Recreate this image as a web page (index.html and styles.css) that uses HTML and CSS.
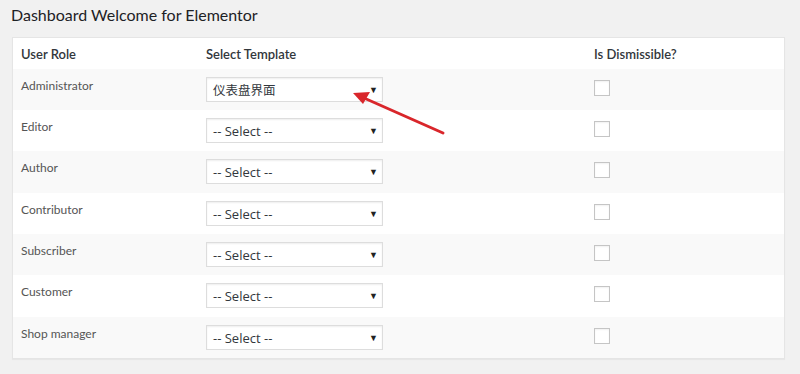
FILE: index.html
```html
<!DOCTYPE html>
<html lang="en">
<head>
<meta charset="utf-8">
<title>Dashboard Welcome for Elementor</title>
<link rel="stylesheet" href="styles.css">
</head>
<body>
<div class="page">
  <h2 class="title">Dashboard Welcome for Elementor</h2>
  <div class="panel">
    <table class="roles">
      <colgroup>
        <col class="c-role">
        <col class="c-tpl">
        <col class="c-dis">
      </colgroup>
      <thead>
        <tr>
          <th>User Role</th>
          <th>Select Template</th>
          <th>Is Dismissible?</th>
        </tr>
      </thead>
      <tbody>
        <tr class="alt">
          <td class="role">Administrator</td>
          <td><div class="sel"><span class="cjk">仪表盘界面</span><span class="caret">▼</span></div></td>
          <td><span class="cb"></span></td>
        </tr>
        <tr>
          <td class="role">Editor</td>
          <td><div class="sel"><span>-- Select --</span><span class="caret">▼</span></div></td>
          <td><span class="cb"></span></td>
        </tr>
        <tr class="alt tall">
          <td class="role">Author</td>
          <td><div class="sel"><span>-- Select --</span><span class="caret">▼</span></div></td>
          <td><span class="cb"></span></td>
        </tr>
        <tr>
          <td class="role">Contributor</td>
          <td><div class="sel"><span>-- Select --</span><span class="caret">▼</span></div></td>
          <td><span class="cb"></span></td>
        </tr>
        <tr class="alt">
          <td class="role">Subscriber</td>
          <td><div class="sel"><span>-- Select --</span><span class="caret">▼</span></div></td>
          <td><span class="cb"></span></td>
        </tr>
        <tr class="tall">
          <td class="role">Customer</td>
          <td><div class="sel"><span>-- Select --</span><span class="caret">▼</span></div></td>
          <td><span class="cb"></span></td>
        </tr>
        <tr class="alt">
          <td class="role">Shop manager</td>
          <td><div class="sel"><span>-- Select --</span><span class="caret">▼</span></div></td>
          <td><span class="cb"></span></td>
        </tr>
      </tbody>
    </table>
  </div>
  <svg class="arrow" width="800" height="374" viewBox="0 0 800 374" aria-hidden="true">
    <line x1="443" y1="133" x2="364" y2="98" stroke="#d9262b" stroke-width="3" stroke-linecap="round"/>
    <polygon points="353,93 370,92 363,104" fill="#d9262b"/>
  </svg>
</div>
</body>
</html>
```

FILE: styles.css
```css
html, body {
  margin: 0;
  padding: 0;
}
body {
  background: #f1f1f1;
  font-family: Lato, "Open Sans", "Noto Sans CJK SC", sans-serif;
  color: #444;
  width: 800px;
  height: 374px;
  overflow: hidden;
}
.page {
  position: relative;
  padding: 0 15px 0 12px;
}
.title {
  margin: 0;
  padding: 5px 0 0 0;
  height: 33px;
  box-sizing: border-box;
  font-size: 16px;
  font-weight: 400;
  color: #1d2125;
  font-family: Lato, "Open Sans", sans-serif;
  line-height: 20px;
  margin-left: -1px;
}
.panel {
  margin-top: 4px;
  background: #fff;
  border: 1px solid #e5e5e5;
  box-shadow: 0 1px 1px rgba(0,0,0,0.04);
  width: 771px;
}
.roles {
  width: 100%;
  border-collapse: collapse;
  table-layout: fixed;
}
.c-role { width: 193px; }
.c-tpl { width: 388px; }
.roles th {
  text-align: left;
  font-weight: 600;
  font-size: 13px;
  color: #32373c;
  height: 31px;
  padding: 0;
  vertical-align: middle;
}
.roles th:first-child { padding-left: 8px; }
.roles td {
  padding: 8px 0;
  vertical-align: top;
  font-size: 12px;
}
.roles tr.tall td { padding-bottom: 9px; }
.roles tr.alt td { background: #f9f9f9; }
.roles td.role {
  padding-left: 8px;
  padding-top: 9px;
  color: #555;
  line-height: 16px;
}
.sel {
  width: 177px;
  height: 25px;
  box-sizing: border-box;
  border: 1px solid #ddd;
  background: #fff;
  box-shadow: inset 0 1px 2px rgba(0,0,0,0.07);
  display: flex;
  align-items: center;
  justify-content: space-between;
  padding: 0 4px 0 6px;
  font-size: 13px;
  color: #32373c;
  font-family: "Open Sans", Lato, sans-serif;
}
.sel .cjk {
  font-family: "Noto Sans CJK SC", sans-serif;
  font-size: 12.5px;
}
.caret {
  font-size: 9px;
  color: #222;
  line-height: 1;
}
.cb {
  display: block;
  width: 16px;
  height: 16px;
  box-sizing: border-box;
  border: 1px solid #c5c5c5;
  background: #fff;
  margin-top: 3px;
  box-shadow: inset 0 1px 2px rgba(0,0,0,0.06);
}
.arrow {
  position: absolute;
  left: 0;
  top: 0;
  pointer-events: none;
}
```
